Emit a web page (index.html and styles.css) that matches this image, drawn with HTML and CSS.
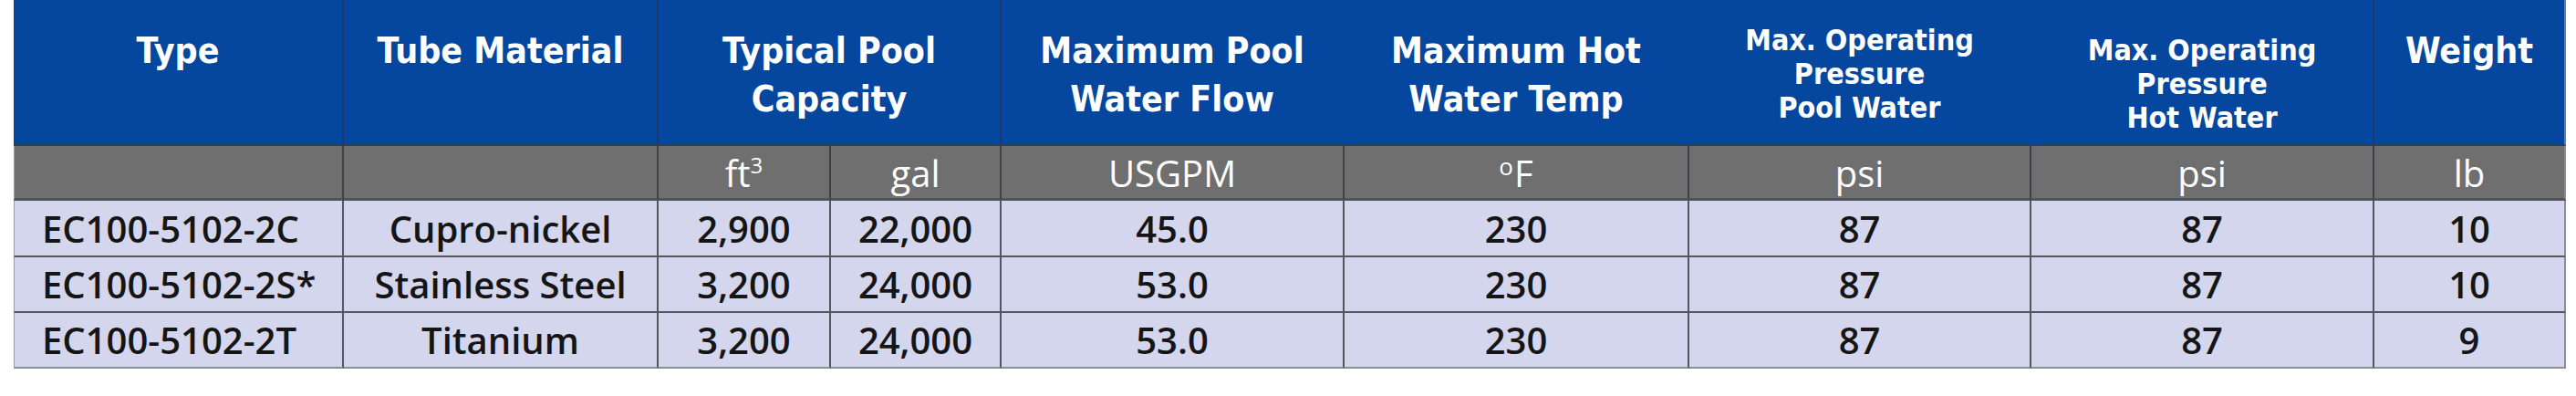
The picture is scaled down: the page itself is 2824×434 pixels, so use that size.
FILE: index.html
```html
<!DOCTYPE html>
<html lang="en">
<head>
<meta charset="utf-8">
<title>Heat exchanger specifications</title>
<link rel="stylesheet" href="styles.css">
</head>
<body>
<div class="spec">
  <div class="h sep">Type</div>
  <div class="h sep">Tube Material</div>
  <div class="h sep span2">Typical Pool<br>Capacity</div>
  <div class="h">Maximum Pool<br>Water Flow</div>
  <div class="h">Maximum Hot<br>Water Temp</div>
  <div class="h h3 pool">Max. Operating<br>Pressure<br>Pool Water</div>
  <div class="h h3 hot sep">Max. Operating<br>Pressure<br>Hot Water</div>
  <div class="h last">Weight</div>

  <div class="u first"></div>
  <div class="u"></div>
  <div class="u"><span>ft<sup class="cube">3</sup></span></div>
  <div class="u"><span>gal</span></div>
  <div class="u"><span>USGPM</span></div>
  <div class="u"><span><sup class="deg">o</sup>F</span></div>
  <div class="u"><span>psi</span></div>
  <div class="u"><span>psi</span></div>
  <div class="u last"><span>lb</span></div>

  <div class="d first left">EC100-5102-2C</div>
  <div class="d">Cupro-nickel</div>
  <div class="d">2,900</div>
  <div class="d">22,000</div>
  <div class="d">45.0</div>
  <div class="d">230</div>
  <div class="d">87</div>
  <div class="d">87</div>
  <div class="d last">10</div>

  <div class="d first left">EC100-5102-2S*</div>
  <div class="d">Stainless Steel</div>
  <div class="d">3,200</div>
  <div class="d">24,000</div>
  <div class="d">53.0</div>
  <div class="d">230</div>
  <div class="d">87</div>
  <div class="d">87</div>
  <div class="d last">10</div>

  <div class="d first left bottom">EC100-5102-2T</div>
  <div class="d bottom">Titanium</div>
  <div class="d bottom">3,200</div>
  <div class="d bottom">24,000</div>
  <div class="d bottom">53.0</div>
  <div class="d bottom">230</div>
  <div class="d bottom">87</div>
  <div class="d bottom">87</div>
  <div class="d last bottom">9</div>
</div>
</body>
</html>
```

FILE: styles.css
```css
html, body {
  margin: 0;
  padding: 0;
  background: #ffffff;
}

.spec {
  margin-left: 15px;
  width: 2798px;
  display: grid;
  grid-template-columns: 362px 345px 189px 187px 376px 378px 375px 376px 210px;
  grid-template-rows: 160px 60px 62px 61px 61px;
}

.spec > div {
  box-sizing: border-box;
}

/* header */
.h {
  background: #05479f;
  color: #ffffff;
  font-family: "DejaVu Sans Condensed", "DejaVu Sans", sans-serif;
  font-stretch: condensed;
  font-weight: bold;
  font-size: 39px;
  line-height: 53px;
  text-align: center;
  padding-top: 29px;
  border-right: 2px solid #05479f;
  border-bottom: 2px solid #2d3d5e;
}
.h.sep {
  border-right-color: #1f3869;
}
.h.span2 {
  grid-column: span 2;
}
.h.h3 {
  font-size: 32px;
  line-height: 37px;
}
.h.pool {
  padding-top: 26px;
}
.h.hot {
  padding-top: 37px;
}
.h.last {
  border-right-color: #6f7a90;
}

/* unit row */
.u {
  background: #6f6f6f;
  color: #ffffff;
  font-family: "Open Sans", "Noto Sans", sans-serif;
  font-size: 40px;
  display: flex;
  align-items: center;
  justify-content: center;
  padding-top: 2px;
  border-right: 2px solid #3f4048;
  border-bottom: 3px solid #50525b;
}
.u.first {
  border-left: 1px solid #9a9ca4;
}
.u.last {
  border-right-color: #8a8c92;
}
.cube {
  font-size: 24px;
  vertical-align: 15px;
  line-height: 0;
}
.deg {
  font-size: 26px;
  vertical-align: 13px;
  line-height: 0;
  margin-right: 1px;
}

/* data rows */
.d {
  background: #d4d6ed;
  color: #151515;
  font-family: "Open Sans", "Noto Sans", sans-serif;
  font-weight: 600;
  font-size: 40px;
  display: flex;
  align-items: center;
  justify-content: center;
  border-right: 2px solid #55565e;
  border-bottom: 2px solid #55565e;
}
.d.left {
  justify-content: flex-start;
  padding-left: 30px;
}
.d.first {
  border-left: 1px solid #9a9ca4;
}
.d.last {
  border-right-color: #8a8c92;
}
.d.bottom {
  border-bottom-color: #8d8f96;
}
```
